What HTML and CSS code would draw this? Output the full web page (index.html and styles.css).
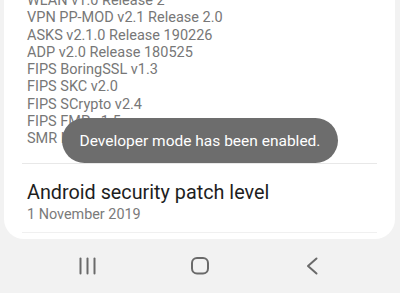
FILE: index.html
```html
<!DOCTYPE html>
<html>
<head>
<meta charset="utf-8">
<link rel="stylesheet" href="styles.css">
</head>
<body>
<div class="screen">
  <div class="card">
    <ul class="versions">
      <li>WLAN v1.0 Release 2</li>
      <li>VPN PP-MOD v2.1 Release 2.0</li>
      <li>ASKS v2.1.0 Release 190226</li>
      <li>ADP v2.0 Release 180525</li>
      <li>FIPS BoringSSL v1.3</li>
      <li>FIPS SKC v2.0</li>
      <li>FIPS SCrypto v2.4</li>
      <li>FIPS FMP v1.5</li>
      <li>SMR Nov-2019 Release 1</li>
    </ul>
    <div class="item">
      <div class="item-title">Android security patch level</div>
      <div class="item-sub">1 November 2019</div>
    </div>
  </div>
  <nav class="navbar">
    <div class="nav-btn">
      <svg width="20" height="20" viewBox="0 0 20 20"><g stroke="#6a6a6a" stroke-width="2" stroke-linecap="round"><line x1="2.5" y1="2.5" x2="2.5" y2="17.5"/><line x1="9.5" y1="2.5" x2="9.5" y2="17.5"/><line x1="16.5" y1="2.5" x2="16.5" y2="17.5"/></g></svg>
    </div>
    <div class="nav-btn">
      <svg width="20" height="20" viewBox="0 0 20 20"><rect x="2" y="2" width="16" height="15.5" rx="5" fill="none" stroke="#6a6a6a" stroke-width="2"/></svg>
    </div>
    <div class="nav-btn">
      <svg width="20" height="20" viewBox="0 0 20 20"><polyline points="14.5,2.5 6,10 14.5,17.5" fill="none" stroke="#6a6a6a" stroke-width="2" stroke-linecap="round" stroke-linejoin="round"/></svg>
    </div>
  </nav>
  <div class="toast">Developer mode has been enabled.</div>
</div>
</body>
</html>
```

FILE: styles.css
```css
html, body {
  margin: 0;
  padding: 0;
}
body {
  background: #f2f2f2;
  font-family: Roboto, "Noto Sans", "Liberation Sans", sans-serif;
}
.screen {
  position: relative;
  width: 400px;
  height: 293px;
  overflow: hidden;
  background: #f2f2f2;
}
.card {
  margin: 0 5px 0 4px;
  padding: 0 18px 6px;
  background: #fff;
  border-radius: 0 0 20px 20px;
}
.versions {
  list-style: none;
  margin: -8px 0 0;
  padding: 0 0 15px 5px;
  border-bottom: 1px solid #e8e8e8;
  font-size: 14.5px;
  line-height: 17.3px;
  color: #777;
}
.item {
  padding: 18px 0 8px 5px;
  border-bottom: 1px solid #f0f0f0;
}
.item-title {
  font-size: 19.8px;
  line-height: 22px;
  color: #1e1e1e;
}
.item-sub {
  margin-top: 2px;
  font-size: 14.4px;
  line-height: 18px;
  color: #7a7a7a;
}
.navbar {
  display: grid;
  grid-template-columns: repeat(3, 112px);
  justify-content: center;
  align-items: center;
  height: 55px;
}
.nav-btn {
  display: flex;
  justify-content: center;
  align-items: center;
}
.nav-btn svg {
  display: block;
}
.toast {
  position: absolute;
  left: 62px;
  top: 118px;
  width: 276px;
  height: 45px;
  border-radius: 23px;
  background: #6d6d6d;
  color: #fff;
  font-size: 15.5px;
  display: flex;
  align-items: center;
  justify-content: center;
}
```
